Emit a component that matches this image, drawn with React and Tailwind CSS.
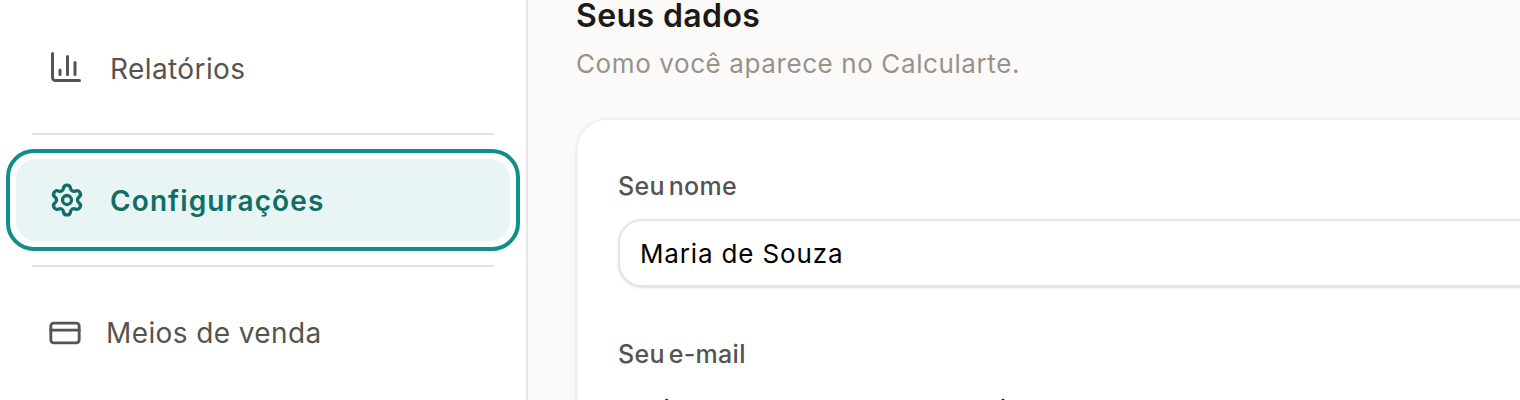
import React from "react";
import { BarChart3, Settings, CreditCard } from "lucide-react";

const Divider = () => <div className="mx-8 h-0.5 bg-[#e7e5e4]" />;

export default function App() {
  return (
    <div className="flex h-[400px] w-[1520px] overflow-hidden bg-[#fbfaf8] font-['Inter',sans-serif]">
      <aside className="flex w-[528px] shrink-0 flex-col border-r-2 border-[#e7e5e4] bg-white">
        <a className="flex h-[133px] items-center gap-[26px] pl-[48px] text-[#57534e]">
          <BarChart3 size={36} strokeWidth={2} />
          <span className="pt-[4px] text-[28px] tracking-[0.4px]">Relatórios</span>
        </a>
        <Divider />
        <div className="mx-1.5 my-3.5 rounded-[28px] border-[4px] border-[#0f8f87] bg-white p-1.5">
          <div className="flex h-[82px] items-center gap-[25px] rounded-[20px] bg-[#e8f5f4] pl-[33px] text-[#0f6e66]">
            <Settings size={36} strokeWidth={2.2} />
            <span className="pt-[2px] text-[28px] font-semibold tracking-[1.1px]">Configurações</span>
          </div>
        </div>
        <Divider />
        <a className="flex h-[132px] items-center gap-[24px] pl-[48px] text-[#57534e]">
          <CreditCard size={34} strokeWidth={2} />
          <span className="text-[28px] tracking-[0.4px]">Meios de venda</span>
        </a>
      </aside>
      <main className="min-w-0 flex-1 pl-[48px]">
        <h2 className="mt-[-4px] text-[32px] leading-10 font-semibold tracking-[0.4px] text-[#1c1917]">Seus dados</h2>
        <p className="mt-[8px] text-[26px] leading-10 tracking-[0.6px] text-[#98928c]">Como você aparece no Calcularte.</p>
        <section className="mt-[34px] w-[1100px] rounded-[32px] border-2 border-[#f3f1ef] bg-white px-[40px] pt-[50px] shadow-sm">
          <label className="block text-[25px] leading-8 font-medium tracking-[0.3px] [word-spacing:-3px] text-[#57534e]">Seu nome</label>
          <div className="mt-[17px] flex h-[68px] items-center rounded-[24px] border-2 border-[#e7e5e4] bg-white px-[20px] text-[26px] tracking-[0.85px] text-black shadow-sm">
            Maria de Souza
          </div>
          <label className="mt-[51px] block text-[25px] leading-8 font-medium tracking-[0.3px] [word-spacing:-3px] text-[#57534e]">Seu e-mail</label>
          <p className="mt-[20px] px-[22px] text-[26px] leading-10 tracking-[0.85px] text-[#1c1917]">
            olivera.lemos.luana.d@gmail.com
          </p>
        </section>
      </main>
    </div>
  );
}
